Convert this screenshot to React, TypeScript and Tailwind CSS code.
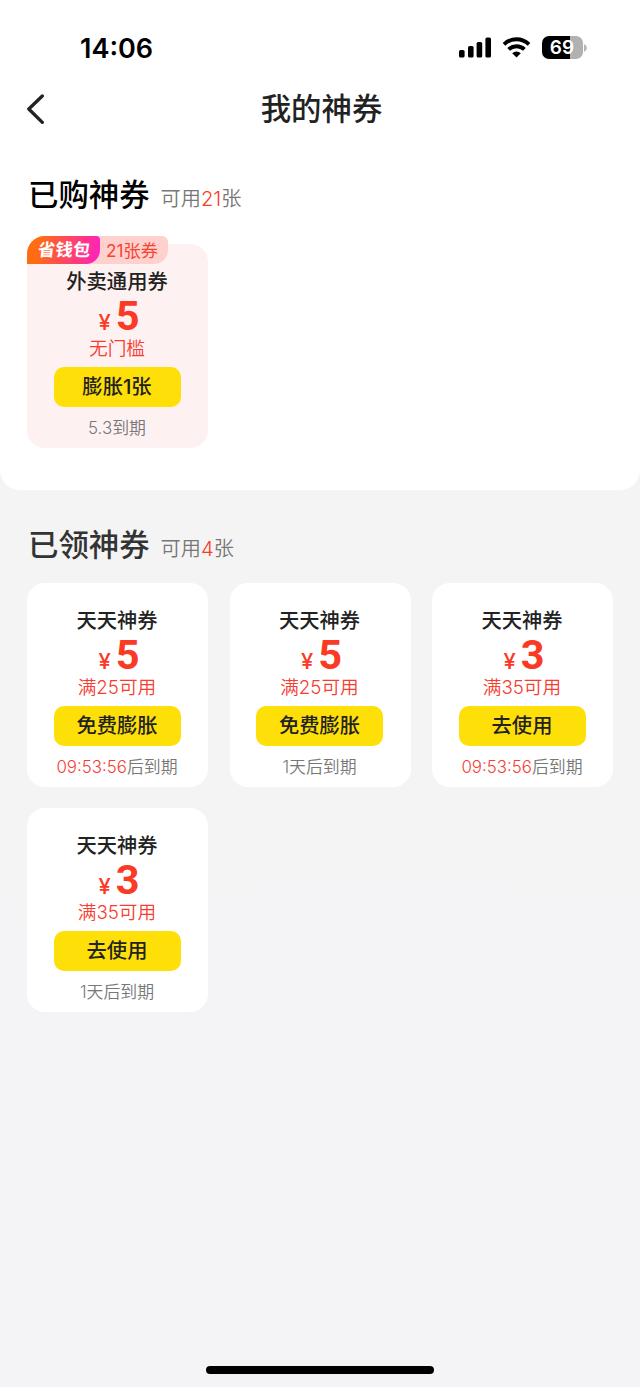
import type { ReactNode } from 'react';

type Coupon = {
  title: string;
  amount: number;
  condition: string;
  action: string;
  countdown?: string;
  expiry: string;
};

const purchased: Coupon = {
  title: '外卖通用券',
  amount: 5,
  condition: '无门槛',
  action: '膨胀1张',
  expiry: '5.3到期',
};

const received: Coupon[] = [
  { title: '天天神券', amount: 5, condition: '满25可用', action: '免费膨胀', countdown: '09:53:56', expiry: '后到期' },
  { title: '天天神券', amount: 5, condition: '满25可用', action: '免费膨胀', expiry: '1天后到期' },
  { title: '天天神券', amount: 3, condition: '满35可用', action: '去使用', countdown: '09:53:56', expiry: '后到期' },
  { title: '天天神券', amount: 3, condition: '满35可用', action: '去使用', expiry: '1天后到期' },
];

function StatusBar() {
  return (
    <div className="flex h-[72px] items-start justify-between pr-[53px] pl-[80px] pt-[32px]">
      <span className="pt-px text-[27px] leading-8 font-semibold text-black">14:06</span>
      <div className="flex pt-[4px]">
        <svg className="h-[24px] w-[34px]" viewBox="0 0 34 24" fill="#000">
          <rect x="0" y="14" width="5.6" height="7.5" rx="1.6" />
          <rect x="9" y="10" width="5.6" height="11.5" rx="1.6" />
          <rect x="17.6" y="6" width="5.6" height="15.5" rx="1.6" />
          <rect x="26.4" y="1.5" width="5.6" height="20" rx="1.6" />
        </svg>
        <svg className="ml-[9px] h-[24px] w-[29px]" viewBox="0 0 29 24" fill="none" stroke="#000" strokeWidth="3.9">
          <path d="M2 8.3a18 18 0 0 1 25 0" />
          <path d="M6.6 13.4a11.4 11.4 0 0 1 15.8 0" />
          <path d="M14.5 21.5l-4.3-4.3a6 6 0 0 1 8.6 0z" fill="#000" stroke="none" />
        </svg>
        <div className="ml-[11px] flex items-start">
          <div className="flex h-[23px] w-[41px] items-center justify-center rounded-[7px] bg-[linear-gradient(90deg,#000_69%,#b1b1b1_69%)] pr-px text-[19px] leading-none font-semibold text-white">
            69
          </div>
          <svg className="mt-[8px] ml-[1px] h-[8px] w-[3px]" viewBox="0 0 3 8">
            <path d="M0 0Q3 1.5 3 4T0 8z" fill="#b8b8b8" />
          </svg>
        </div>
      </div>
    </div>
  );
}

function SectionTitle({ children, count, color }: { children: ReactNode; count: number; color: string }) {
  return (
    <div className="flex h-[44px] items-baseline gap-[11px]">
      <h2 className={`text-[30.4px] leading-[46px] font-medium ${color}`}>{children}</h2>
      <span className="text-[20.2px] font-[350] text-[#777]">
        可用<span className="text-[#fa3c28]">{count}</span>张
      </span>
    </div>
  );
}

function CouponCard({ coupon, background }: { coupon: Coupon; background: string }) {
  return (
    <article className={`flex h-[204px] w-[181px] flex-col items-center rounded-[18px] pt-[24px] pr-[1px] ${background}`}>
      <h3 className="h-[26px] text-[20.3px] leading-[28px] font-medium text-[#222]">{coupon.title}</h3>
      <div className="flex h-[42px] items-baseline gap-[5px] pl-[4px] font-[Roboto] leading-[44px] text-[#fb3a26]">
        <span className="font-[Inter] text-[22px] font-medium">¥</span>
        <span className="text-[41.5px] font-bold">{coupon.amount}</span>
      </div>
      <p className="h-[24px] text-[18.7px] leading-[26px] font-[350] text-[#f73c32]">{coupon.condition}</p>
      <button className="mt-[7px] h-[40px] w-[127px] shrink-0 rounded-[10px] bg-[#fedf08] text-[20.3px] leading-[38px] font-medium text-[#222]">
        {coupon.action}
      </button>
      <p className="mt-[9px] h-[24px] text-[16.9px] leading-[24px] font-[350] whitespace-nowrap text-[#777]">
        {coupon.countdown && <span className="text-[#f73c32]">{coupon.countdown}</span>}
        {coupon.expiry}
      </p>
    </article>
  );
}

export default function App() {
  return (
    <div className="flex h-[1387px] w-[640px] flex-col bg-[linear-gradient(#f4f4f4_490px,#f4f4f6_1000px)] font-[Inter,'Noto_Sans_CJK_SC',sans-serif]">
      <div className="h-[490px] shrink-0 rounded-b-[20px] bg-white">
        <StatusBar />
        <header className="grid h-[72px] grid-cols-[60px_1fr_60px] items-center">
          <svg className="ml-[25px] h-[32px] w-[22px]" viewBox="0 0 22 32" fill="none" stroke="#222" strokeWidth="3.3" strokeLinecap="round" strokeLinejoin="round">
            <path d="M17.3 4L3.8 17L17.3 30.4" />
          </svg>
          <h1 className="pt-[4px] pl-[3px] text-center text-[30.4px] font-medium text-[#222]">我的神券</h1>
        </header>
        <section className="px-[28px] pt-[28px]">
          <SectionTitle count={21} color="text-black">已购神券</SectionTitle>
          <div className="relative mt-[28px] -ml-px">
            <CouponCard coupon={purchased} background="bg-[#fef1f1]" />
            <div className="absolute -top-[8.5px] left-0 flex h-[28px] w-[141px] rounded-tl-[18px] rounded-tr-[6px] rounded-br-[14px] bg-[#ffd1ce]">
              <span className="w-[73px] rounded-tl-[18px] rounded-tr-[4px] rounded-br-[14px] bg-[linear-gradient(100deg,#ff6d10_15%,#ff348b_75%,#ff20c4)] pl-px text-center text-[17.5px] leading-[28px] font-bold text-white">
                <span className="inline-block -skew-x-6">省钱包</span>
              </span>
              <span className="pl-[6px] text-[17.2px] leading-[29px] text-[#f74432]">21张券</span>
            </div>
          </div>
        </section>
      </div>
      <section className="px-[28px] pt-[32px]">
        <SectionTitle count={4} color="text-[#333]">已领神券</SectionTitle>
        <div className="mt-[17px] -ml-px grid w-[586px] grid-cols-[repeat(3,181px)] justify-between gap-y-[21px]">
          {received.map((coupon, index) => (
            <CouponCard key={index} coupon={coupon} background="bg-white" />
          ))}
        </div>
      </section>
      <div className="mt-auto mb-[13px] ml-[206px] h-[8px] w-[228px] rounded-full bg-black" />
    </div>
  );
}
